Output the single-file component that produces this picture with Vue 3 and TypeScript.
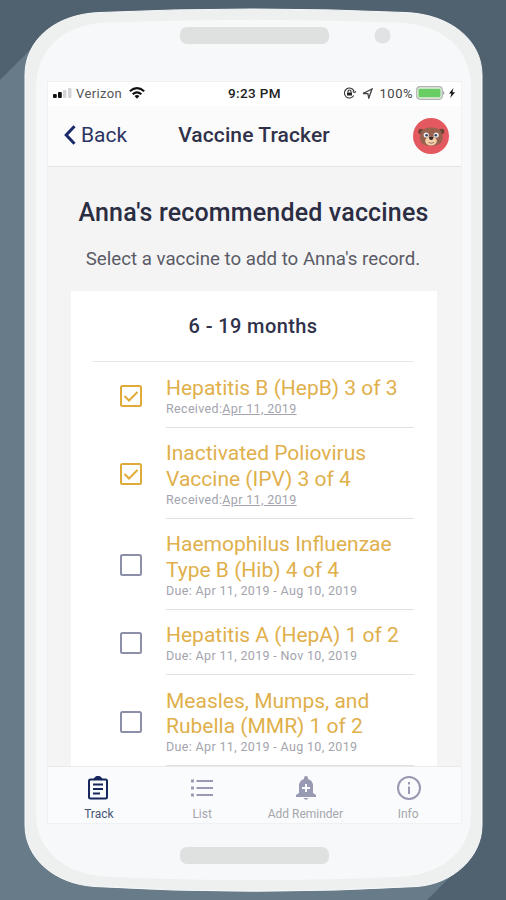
<script setup lang="ts">
interface Vaccine {
  lines: string[]
  label: string
  date: string
  done: boolean
}

const vaccines: Vaccine[] = [
  { lines: ['Hepatitis B (HepB) 3 of 3'], label: 'Received:', date: 'Apr 11, 2019', done: true },
  { lines: ['Inactivated Poliovirus', 'Vaccine (IPV) 3 of 4'], label: 'Received:', date: 'Apr 11, 2019', done: true },
  { lines: ['Haemophilus Influenzae', 'Type B (Hib) 4 of 4'], label: 'Due: ', date: 'Apr 11, 2019 - Aug 10, 2019', done: false },
  { lines: ['Hepatitis A (HepA) 1 of 2'], label: 'Due: ', date: 'Apr 11, 2019 - Nov 10, 2019', done: false },
  { lines: ['Measles, Mumps, and', 'Rubella (MMR) 1 of 2'], label: 'Due: ', date: 'Apr 11, 2019 - Aug 10, 2019', done: false },
]
</script>

<template>
  <div class="stage">
    <svg class="backdrop" viewBox="0 0 506 900" aria-hidden="true">
      <rect width="506" height="900" fill="#506170" />
      <path d="M0 80 40 40 465 862 427 900H0Z" fill="#687b89" />
      <path d="M25 75C25 40 55 14 100 12.500Q253 5.500 405 12.500C450 14 482 40 482 75V825C482 858 452 884 417 886.500Q253 896 95 886.500C54 884 25 858 25 825Z" fill="#eeefef" stroke="#f7f9fa" stroke-width="1" />
      <path d="M36 88C36 50 62 25 105 22.500Q253 17 400 22.500C445 25 471 50 471 88V815C471 848 445 873 405 876.500Q253 884 103 876.500C62 873 36 848 36 815Z" fill="#f6f8f9" />
      <rect x="180" y="27" width="149" height="17" rx="7" fill="#dfe1e1" />
      <circle cx="382.500" cy="35.500" r="8" fill="#e1e2e3" />
      <rect x="180" y="847" width="149" height="17" rx="7" fill="#dfe0e0" />
    </svg>

    <main class="screen">
      <div class="status">
        <div class="carrier">
          <svg class="signal" viewBox="0 0 19 12">
            <rect x="0" y="7" width="3.800" height="4" rx="1" fill="#111" />
            <rect x="5" y="5" width="3.800" height="6" rx="1" fill="#111" />
            <rect x="10" y="3" width="3.500" height="8" rx="1" fill="#d5d5d7" />
            <rect x="15" y="1" width="3.500" height="10" rx="1" fill="#d5d5d7" />
          </svg>
          <span class="carrier-name">Verizon</span>
          <svg class="wifi" viewBox="0 0 16 12" fill="none" stroke="#111" stroke-width="2">
            <path d="M.8 4.200Q8-2 15.200 4.200M3.600 7.300Q8 3.500 12.400 7.300" />
            <path d="M5.500 9Q8 7 10.500 9L8 11.700Z" fill="#111" stroke="none" />
          </svg>
        </div>
        <span class="clock">9:23 PM</span>
        <div class="power">
          <svg class="lock" viewBox="0 0 14 12" fill="none" stroke="#333" stroke-width="1.100">
            <path d="M10.800 8.500A5 5 0 1 1 11 4M11.500 5.500 13 4.500M11.500 5.500 9.700 4.500" />
            <rect x="4" y="5.500" width="5" height="3" fill="#222" stroke="none" />
            <path d="M5 5.500V4.500a1.500 1.500 0 0 1 3 0V5.500" />
          </svg>
          <svg class="locate" viewBox="0 0 11 11" fill="none" stroke="#444" stroke-width="1.300">
            <path d="M1 5.500 10 1 6.800 10 5.800 5.700Z" />
          </svg>
          <span class="percent">100%</span>
          <svg class="battery" viewBox="0 0 29 14">
            <rect x=".7" y=".7" width="25.600" height="12.600" rx="3.500" fill="#e6eee4" stroke="#b0b3b0" stroke-width="1.200" />
            <rect x="2.500" y="2.800" width="22" height="8.400" rx="1" fill="#68ce63" />
            <path d="M27.200 4.800q2.300 2.200 0 4.400Z" fill="#999" />
          </svg>
          <svg class="bolt" viewBox="0 0 6 10"><path d="M4.500 0 0 5.600H2.500L1.200 10 6 4.200H3.400Z" fill="#111" /></svg>
        </div>
      </div>

      <header class="nav">
        <button class="back" type="button">
          <svg viewBox="0 0 12 20" fill="none" stroke="#19296a" stroke-width="3"><path d="M10.500 1.200 2.200 10 10.500 18.800" /></svg>
          <span>Back</span>
        </button>
        <h1>Vaccine Tracker</h1>
        <svg class="avatar" viewBox="0 0 36 36">
          <circle cx="18" cy="18" r="18" fill="#e4595f" />
          <circle cx="8" cy="13.500" r="2.800" fill="#6b4439" />
          <circle cx="28.500" cy="13.500" r="2.800" fill="#6b4439" />
          <path d="M8 14Q10 9.500 18.200 9.500T28.500 14L29.800 20Q29 28 18.200 28T6.700 20Z" fill="#97614d" />
          <ellipse cx="18" cy="23" rx="5.800" ry="4.600" fill="#f3d0a9" />
          <circle cx="13.200" cy="17" r="2.600" fill="#e9edf0" /><circle cx="23.200" cy="17" r="2.600" fill="#e9edf0" />
          <circle cx="13.600" cy="17.200" r="1.300" fill="#39455c" /><circle cx="22.800" cy="17.200" r="1.300" fill="#39455c" />
          <path d="M15.800 19.500Q18.200 17.500 20.600 19.500 20 22 18.200 22T15.800 19.500Z" fill="#35262a" />
          <path d="M15.500 24.500Q18.200 26 21 24.500" fill="none" stroke="#8a6350" stroke-width=".8" />
        </svg>
      </header>

      <section class="content">
        <h2><span>Anna's recommended vaccines</span></h2>
        <p class="hint">Select a vaccine to add to Anna's record.</p>
        <div class="card">
          <h3>6 - 19 months</h3>
          <ul>
            <li v-for="v in vaccines" :key="v.lines[0]" :class="{ done: v.done, double: v.lines.length > 1 }">
              <svg class="box" viewBox="0 0 22 22" fill="none">
                <rect x="1" y="1" width="20" height="20" rx="1.500" stroke="currentColor" stroke-width="2" />
                <path v-if="v.done" d="M4.500 11 9 15.500 17.500 7" stroke="currentColor" stroke-width="2" />
              </svg>
              <div class="info">
                <div v-for="line in v.lines" :key="line" class="name"><span>{{ line }}</span></div>
                <div class="when">{{ v.label }}<span :class="{ link: v.done }">{{ v.date }}</span></div>
              </div>
            </li>
          </ul>
        </div>
      </section>

      <nav class="tabs">
        <div class="tab active">
          <svg viewBox="0 0 24 24" fill="none" stroke="currentColor" stroke-width="2">
            <rect x="3" y="3.500" width="18" height="19" rx="1.500" />
            <path d="M8 3.500Q9 3 9.500 2 12-.5 14.500 2 15 3 16 3.500" fill="currentColor" />
            <path d="M7 8.500h10M7 13h10M7 17.500h7" />
          </svg>
          <span>Track</span>
        </div>
        <div class="tab">
          <svg viewBox="0 0 24 24" fill="none" stroke="currentColor" stroke-width="2">
            <path d="M6.500 5H23M6.500 12H23M6.500 19H23" />
            <path d="M1 5h3M1 12h3M1 19h3" stroke-width="3" />
          </svg>
          <span>List</span>
        </div>
        <div class="tab wide">
          <svg viewBox="0 0 24 24">
            <path d="M10 2a2 2 0 0 1 4 0v1q5 1.500 5 7v7l3 2v2H2v-2l3-2v-7q0-5.500 5-7ZM9.500 22h5q-2.500 3.500-5 0Z" fill="currentColor" />
            <path d="M12 8v8M8 12h8" stroke="#fafbfc" stroke-width="2" />
          </svg>
          <span>Add Reminder</span>
        </div>
        <div class="tab wide">
          <svg viewBox="0 0 24 24" fill="none" stroke="currentColor" stroke-width="2">
            <circle cx="12" cy="12" r="11" /><path d="M12 10.500V18M12 6v2.500" />
          </svg>
          <span>Info</span>
        </div>
      </nav>
    </main>
  </div>
</template>

<style>
body { margin: 0; overflow: hidden; }
</style>

<style scoped>
* { box-sizing: border-box; }
.stage { position: relative; width: 506px; height: 900px; padding: 81px 44px 76px 47px; overflow: hidden; font-family: Roboto, "Liberation Sans", sans-serif; }
.backdrop { position: absolute; inset: 0; width: 506px; height: 900px; }
.screen { position: relative; display: flex; flex-direction: column; width: 415px; height: 743px; background: #f4f4f5; border: 1px solid #eff1f2; overflow: hidden; white-space: nowrap; }
h1, h2, h3, p, ul { margin: 0; padding: 0; }
h1, h2, h3 { font-weight: 500; }
.status { display: grid; grid-template-columns: 1fr auto 1fr; align-items: center; height: 24px; padding: 0 6px 2px 5px; background: #fff; color: #222; font-size: 13px; }
.carrier, .power { display: flex; align-items: center; }
.power { justify-content: flex-end; }
.signal { width: 19px; height: 12px; }
.carrier-name { margin-left: 4px; color: #555; letter-spacing: .4px; }
.wifi { width: 16px; height: 12px; margin-left: 7px; }
.clock { padding-left: 1px; font-size: 13.500px; font-weight: 500; letter-spacing: .35px; }
.lock { width: 14px; height: 12px; }
.locate { width: 11px; height: 11px; margin-left: 5px; }
.percent { margin-left: 7px; color: #444; letter-spacing: .5px; }
.battery { width: 29px; height: 14px; margin-left: 3px; }
.bolt { width: 6px; height: 10px; margin-left: 4px; }
.nav { display: grid; grid-template-columns: 96px 1fr 101px; align-items: center; height: 61px; padding: 0 12px 0 16px; background: #fbfbfc; border-bottom: 1px solid #e2e3e5; }
.back { display: flex; align-items: center; gap: 5px; padding: 0 0 2px; border: 0; background: none; color: #2b3563; font: 400 21px Roboto, sans-serif; }
.back svg { width: 12px; height: 20px; }
h1 { padding-bottom: 2px; text-align: center; color: #30324a; font-size: 21px; letter-spacing: .1px; }
.avatar { justify-self: end; width: 36px; height: 36px; }
.content { flex: 1; min-height: 0; overflow: hidden; padding: 0 23px; }
h2 { margin: 30px -9px 0 -11px; line-height: 32px; text-align: center; color: #2b2d42; font-size: 25px; letter-spacing: .17px; }
.hint { margin-top: 18px; margin-right: 3px; line-height: 24px; text-align: center; color: #5a5b66; font-size: 18.700px; }
.card { width: 366px; height: 520px; margin-top: 20px; padding: 0 23px 0 21px; background: #fff; }
h3 { height: 71px; line-height: 70px; border-bottom: 1px solid #e8e8ea; text-align: center; color: #30324a; font-size: 20px; letter-spacing: .4px; }
ul { list-style: none; }
li { display: flex; align-items: center; height: 65.500px; padding-left: 28px; color: #8c8fa8; }
li.double { height: 91px; }
li.done { color: #dfaa38; }
.box { width: 22px; height: 22px; margin: 2px 24px 0 0; }
.info { display: flex; flex: 1; flex-direction: column; height: 100%; padding-top: 13.500px; border-bottom: 1px solid #e1e1e4; }
.name { height: 25.500px; line-height: 25px; color: #dfb04b; font-size: 21px; }
.when { margin-top: -.5px; line-height: 15px; color: #a3a4ad; font-size: 12.500px; letter-spacing: .34px; white-space: pre; }
.link { text-decoration: underline; }
.tabs { display: grid; grid-template-columns: repeat(4, 1fr); height: 57px; padding-right: 2px; background: #fafbfc; border-top: 1px solid #e8e9eb; }
.tab { display: flex; flex-direction: column; align-items: center; padding-top: 9px; color: #9899b2; }
.tab svg { width: 24px; height: 24px; margin-left: -1px; }
.tab span { margin-top: 6px; line-height: 16px; color: #a5a6ad; font-size: 12px; }
.tab.wide svg { margin-left: 2px; }
.tab.wide span { margin-left: 1px; }
.tab.active { color: #17275d; }
.tab.active svg { margin-left: -3px; }
.tab.active span { margin-left: -1px; color: #465675; }
</style>
